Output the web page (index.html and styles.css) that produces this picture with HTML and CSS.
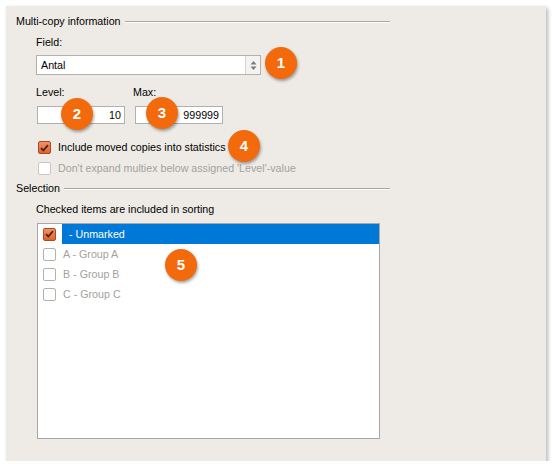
FILE: index.html
```html
<!DOCTYPE html>
<html>
<head>
<meta charset="utf-8">
<link rel="stylesheet" href="styles.css">
</head>
<body>
<div class="panel">
  <div class="group-header"><span class="group-title">Multi-copy information</span><span class="group-line"></span></div>
  <div class="indent">
    <div class="label field-label">Field:</div>
    <div class="combo">
      <span class="combo-text">Antal</span>
      <span class="spin">
        <svg width="7" height="11" viewBox="0 0 7 11"><path d="M3.5 1 L6.5 4.5 L0.5 4.5 Z" fill="#7a7a7a"/><path d="M3.5 10 L6.5 6.5 L0.5 6.5 Z" fill="#7a7a7a"/></svg>
      </span>
    </div>
    <div class="num-row">
      <div class="num-col level-col">
        <div class="label">Level:</div>
        <div class="num-input level-input">10</div>
      </div>
      <div class="num-col max-col">
        <div class="label">Max:</div>
        <div class="num-input max-input">999999</div>
      </div>
    </div>
    <div class="check-row">
      <span class="cb checked"><svg width="9" height="8" viewBox="0 0 9 8"><path d="M1 4.2 L3.3 6.5 L8 1.2" fill="none" stroke="#4a2412" stroke-width="1.8"/></svg></span>
      <span class="check-text">Include moved copies into statistics</span>
    </div>
    <div class="check-row disabled">
      <span class="cb"></span>
      <span class="check-text">Don't expand multiex below assigned 'Level'-value</span>
    </div>
  </div>
  <div class="group-header sel-header"><span class="group-title">Selection</span><span class="group-line"></span></div>
  <div class="indent">
    <div class="label hint">Checked items are included in sorting</div>
    <div class="listbox">
      <div class="item">
        <span class="cb checked"><svg width="9" height="8" viewBox="0 0 9 8"><path d="M1 4.2 L3.3 6.5 L8 1.2" fill="none" stroke="#4a2412" stroke-width="1.8"/></svg></span>
        <span class="item-label selected">  - Unmarked</span>
      </div>
      <div class="item">
        <span class="cb"></span>
        <span class="item-label">A - Group A</span>
      </div>
      <div class="item">
        <span class="cb"></span>
        <span class="item-label">B - Group B</span>
      </div>
      <div class="item">
        <span class="cb"></span>
        <span class="item-label">C - Group C</span>
      </div>
    </div>
  </div>
  <span class="badge b1">1</span>
  <span class="badge b2">2</span>
  <span class="badge b3">3</span>
  <span class="badge b4">4</span>
  <span class="badge b5">5</span>
</div>
</body>
</html>
```
FILE: styles.css
```css
html, body {
  margin: 0;
  padding: 0;
  background: #ffffff;
}
body {
  font-family: "Liberation Sans", Arial, sans-serif;
  font-size: 10.7px;
  line-height: 13px;
  color: #000;
}
.panel {
  position: relative;
  margin: 6px 0 0 6px;
  width: 540px;
  height: 455px;
  box-sizing: border-box;
  padding: 9px 0 0 10px;
  background: #eeebe6;
  box-shadow: 2px 2px 4px rgba(0,0,0,0.28);
}
.group-header {
  display: flex;
  align-items: center;
  width: 374px;
  height: 13px;
}
.group-title {
  white-space: nowrap;
}
.group-line {
  flex: 1;
  margin-left: 4px;
  height: 0;
  border-top: 1px solid #a9a7a3;
  border-bottom: 1px solid #ffffff;
}
.indent {
  padding-left: 20px;
}
.label {
  height: 13px;
  white-space: nowrap;
}
.field-label {
  margin-top: 8px;
}
.combo {
  margin-top: 6px;
  width: 225px;
  height: 20px;
  box-sizing: border-box;
  border: 1px solid #b2b0ac;
  background: #fff;
  display: flex;
  align-items: center;
}
.combo-text {
  flex: 1;
  padding-left: 4px;
}
.spin {
  width: 14px;
  height: 18px;
  border-left: 1px solid #d6d4d0;
  background: #f4f3f1;
  display: flex;
  align-items: center;
  justify-content: center;
}
.num-row {
  display: flex;
  margin-top: 11px;
}
.level-col {
  width: 97px;
}
.num-input {
  margin-top: 7px;
  width: 88px;
  height: 18px;
  box-sizing: border-box;
  border: 1px solid #b2b0ac;
  background: #fff;
  text-align: right;
  padding: 2px 3px 0 0;
}
.level-input {
  margin-left: 1px;
}
.max-input {
  margin-left: 2px;
}
.check-row {
  display: flex;
  align-items: center;
  height: 21px;
  padding-left: 2px;
}
.num-row + .check-row {
  margin-top: 13px;
}
.check-text {
  margin-left: 7px;
  white-space: nowrap;
}
.disabled .check-text {
  color: #a3a19e;
}
.cb {
  width: 13px;
  height: 13px;
  box-sizing: border-box;
  border: 1px solid #b4b2ae;
  border-radius: 2px;
  background: #fff;
  display: flex;
  align-items: center;
  justify-content: center;
  flex: none;
}
.disabled .cb {
  border-color: #c9c7c3;
}
.cb.checked {
  border-color: #a84a22;
  background: linear-gradient(#f39067, #e0632f);
}
.sel-header {
  margin-top: 3px;
}
.hint {
  margin-top: 8px;
}
.listbox {
  margin-top: 7px;
  margin-left: 1px;
  width: 343px;
  height: 216px;
  box-sizing: border-box;
  border: 1px solid #a9a7a3;
  background: #fff;
}
.item {
  display: flex;
  align-items: center;
  height: 20px;
  padding-left: 5px;
}
.item-label {
  margin-left: 6px;
  padding-left: 1px;
  white-space: pre;
  color: #a3a19e;
  align-self: stretch;
  display: flex;
  align-items: center;
}
.item-label.selected {
  flex: 1;
  background: #0078d7;
  color: #fff;
}
.badge {
  position: absolute;
  width: 32px;
  height: 32px;
  border-radius: 50%;
  background: #f26a0c;
  color: #fff;
  font-family: "Liberation Sans", Arial, sans-serif;
  font-weight: bold;
  font-size: 15px;
  line-height: 32px;
  text-align: center;
  box-shadow: 1px 2px 3px rgba(0,0,0,0.35);
}
.b1 { left: 259px; top: 41px; }
.b2 { left: 55px; top: 92px; }
.b3 { left: 140px; top: 91px; }
.b4 { left: 222px; top: 124px; }
.b5 { left: 159px; top: 243px; }
```
